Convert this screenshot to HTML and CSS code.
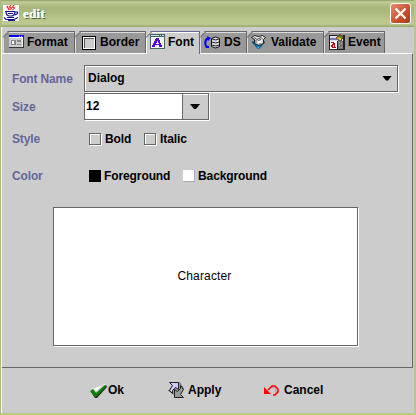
FILE: index.html
```
<!DOCTYPE html>
<html lang="en"><head><meta charset="utf-8"><title>edit</title><link rel="stylesheet" href="styles.css"></head>
<body><div class="window">
<header class="titlebar">
<svg class="logo" width="16" height="16" viewBox="0 0 16 16"><path fill="#fff" d="M0 0h16v16H0z"/><g fill="none" stroke="#f03028"><path d="M5 1l-1 1 2 2-1 1M8 0L6.500 2l2 1L7 5M11 0L9.500 2l2 1-2 2" stroke-width="1.200"/></g><g fill="none" stroke="#10108c" stroke-width="1.200"><path d="M2 6.500h10M3 7l1 3 2 1h3l2-1 1-3M12 7h2.500v1.500L12 10M5 8.500h5M4 12.500h7M1 12.500l2 2h8l4-2M5 15.500h7"/></g></svg>
<span class="title">edit</span>
<button class="close" aria-label="Close"><svg width="19" height="19" viewBox="0 0 19 19"><path d="M4.500 4.500l10 10M14.500 4.500l-10 10" stroke="#fff" stroke-width="2.200"/></svg></button>
</header>
<main class="client">
<nav class="tabs">
<div class="tab format"><svg width="15" height="13" viewBox="0 0 15 13" shape-rendering="crispEdges"><path fill="#333" d="M0 0h15v13H0z"/><path fill="#ccc" d="M0 1h13v11H0z"/><path fill="#00f" d="M0 0h10v2H0zM11 0h1v2h-1zM13 0h1v2h-1z"/><path fill="#888" d="M2 5h5v5H2zM8 5h4v2H8zM8 9h4v1H8z"/><path fill="#fff" d="M3 6h2v3H3zM0 2h13v1H0zM13 2h1v10h-1z"/></svg><span>Format</span></div>
<div class="tab border"><svg width="14" height="14" viewBox="0 0 14 14" shape-rendering="crispEdges"><path fill="#fff" d="M0 0h14v14H0z"/><path fill="#000" d="M0 0h13v1H1v12H0zM13 0h1v14H0v-1h13z"/><path fill="#ccc" d="M2 2h10v10H2z"/><path fill="#555" d="M2 2h10v1H3v9H2z"/></svg><span>Border</span></div>
<div class="tab font active"><svg width="15" height="15" viewBox="0 0 15 15" shape-rendering="crispEdges"><path fill="#466" d="M0 0h15v15H0z"/><path fill="#eef5f5" d="M1 3h13v11H1z"/><path fill="#cdd" d="M1 1h8v1H1zM10 1h1v1h-1zM12 1h2v1h-2z"/><path fill="#50d" fill-rule="evenodd" d="M6 4h3v2h1v3h1v2h1v2H9v-2H5v2H2v-2h1V9h1V7h1V5h1zM7 7v2H6v1h3V9H8V7z"/></svg><span>Font</span></div>
<div class="tab ds"><svg width="17" height="13" viewBox="0 0 17 13"><path fill="none" stroke="#00f" stroke-width="2" d="M5 2C1 3 0 8 3 11"/><path fill="#00f" d="M3 0l4 2-3 3zM1 10h4v2H2z"/><path fill="#ddd" stroke="#111" d="M7.500 2.500q4.500-3 8 0v8q-4 3-8 0z"/><path fill="none" stroke="#222" d="M8 3q4 2 7 0M8 6q4 2 7 0M8 9q4 2 7 0"/></svg><span>DS</span></div>
<div class="tab validate"><svg width="15" height="15" viewBox="0 0 15 15"><path fill="#087cc0" stroke="#024870" d="M1 7h13L7.500 14z"/><path fill="#ddd" stroke="#222" d="M.5 2.500l3-2 4 1 4-1 3 2-2 2v4l-4 2-5-2v-4z"/><path fill="none" stroke="#555" d="M3 2.500l3 2 4-2 2 2M5 5v3M7 6l3-2M8 9h4"/><path fill="#fff" d="M7 6h3v2H7z"/><path fill="#4cf" d="M6 12h2v2z"/></svg><span>Validate</span></div>
<div class="tab event"><svg width="16" height="16" viewBox="0 0 16 16" shape-rendering="crispEdges"><path fill="#222" d="M0 1h16v15H0z"/><path fill="#dde" d="M1 2h13v5H1z"/><path fill="#7777c0" d="M1 4h8v2H1z"/><path fill="#fff" d="M1 7h7v8H1z"/><path fill="#777" d="M9 7h5v8H9z"/><path fill="#bbb" d="M10 8h1v1h-1zM12 9h1v1h-1zM10 11h1v1h-1zM12 13h1v1h-1z"/><path fill="#653" d="M8 1h2V0h2v1h2v4h-1v2H9V5H7V3h1z"/><path fill="#f80" d="M8 3h3v2H8z"/><path fill="#28a040" d="M11 2h2v2h-2z"/><path fill="#fc3" d="M10 4h2v2h-2z"/><path fill="#b00" fill-rule="evenodd" d="M2 8h3v1h1v4h1v1H3v-1H2v-2h1v-1h1V9H2zM4 11v2h1v-2z"/></svg><span>Event</span></div>
</nav>
<section class="panel">
<div class="row name"><label>Font Name</label><div class="combo wide"><span>Dialog</span><i class="arrow"></i></div></div>
<div class="row size"><label>Size</label><div class="combo edit"><span class="field">12</span><i class="arrow"></i></div></div>
<div class="row style"><label>Style</label><i class="check"></i><span class="opt bold">Bold</span><i class="check"></i><span class="opt">Italic</span></div>
<div class="row color"><label>Color</label><i class="swatch black"></i><span class="opt fore">Foreground</span><i class="swatch white"></i><span class="opt">Background</span></div>
<div class="preview">Character</div>
</section>
<footer class="actions">
<div class="action ok"><svg width="17" height="14" viewBox="0 0 17 14"><path fill="#fff" d="M0 6l3-2 3 3 8-7h2z"/><path fill="#222" d="M1 8l4 6h2L17 3l-1-2-9 8z"/><path fill="#088008" d="M0 7l3-2 3 4 9-8 1 2-10 10H5z"/></svg><span>Ok</span></div>
<div class="action apply"><svg width="17" height="18" viewBox="0 0 17 18"><path fill="#999" stroke="#333" stroke-dasharray="1 1" d="M.5 9.500l4-4 7-4 4 6-3 2-3 7z"/><path fill="#ccf" stroke="#222" d="M1.500 1.500h9v7l-3-2-3 3v3l-3-3 3-5z"/><path fill="#999" stroke="#222" d="M6.500 8.500l3 2 3-3v-3l3 4-3 5 3 3h-9z"/></svg><span>Apply</span></div>
<div class="action cancel"><svg width="15" height="11" viewBox="0 0 15 11"><path fill="none" stroke="#999" d="M5 4l4-2 3 2v5"/><path fill="none" stroke="#f00" stroke-width="1.500" d="M4 5l4-4h3l3 3v3l-3 3H9"/><path fill="#f00" d="M0 2l7 7H0z"/></svg><span>Cancel</span></div>
</footer></main></div></body></html>
```
FILE: styles.css
```
* { box-sizing: border-box; }
body { margin: 0; font: bold 12px/14px "Liberation Sans", Arial, sans-serif; color: #000; }
svg { display: block; flex: none; }
.window { width: 416px; height: 415px; background: #ccc; border: solid #a9b978; border-width: 0 2px 2px 1px; border-right-color: #b9c78a; border-bottom-color: #b9c985; overflow: hidden; }
.titlebar { height: 27px; margin-right: -2px; display: flex; align-items: flex-start; padding: 5px 5px 0 2px; background: linear-gradient(#929f68 0, #c4ce9b 2px, #b4c188 4px, #a8b67c 8px, #acba80 13px, #b8c68c 19px, #bdca92 24px, #98a66b 27px); }
.title { margin: 2px 0 0 4px; color: #fff; font: bold 13px/14px "Liberation Serif", serif; letter-spacing: .3px; text-shadow: 0 0 #fff, 1px 1px #4d5b26; }
.close { margin: -2px 0 0 auto; width: 21px; height: 21px; padding: 0; border: 1px solid #fff; border-radius: 3px; background: linear-gradient(135deg, #e48b70, #c94e2c 60%, #a83a18); }
.client { height: 386px; border-left: 1px solid #fff; padding-top: 4px; display: flex; flex-direction: column; }
.tabs { display: flex; height: 22px; margin-left: 1px; }
.tab { position: relative; height: 22px; display: flex; align-items: flex-start; background: #999; border-top: 1px solid #666; border-right: 1px solid #666; box-shadow: inset 1px 1px #ddd; clip-path: polygon(5px 0, 100% 0, 100% 100%, 0 100%, 0 5px); }
.tab::before { content: ""; position: absolute; left: -1px; top: 2px; width: 8px; height: 1px; background: #777; transform: rotate(-45deg); }
.tab span { margin-top: 3px; }
.format { width: 72px; padding-left: 6px; } .format svg { margin: 3px 3px 0 0; }
.border { width: 71px; padding-left: 7px; } .border svg { margin: 4px 4px 0 0; }
.font { width: 54px; padding-left: 4px; } .font svg { margin: 2px 3px 0 0; }
.ds { width: 47px; padding-left: 4px; } .ds svg { margin: 4px 3px 0 0; }
.validate { width: 77px; padding-left: 4px; } .validate svg { margin: 3px 5px 0 0; }
.event { width: 61px; padding-left: 5px; } .event svg { margin: 2px 3px 0 0; }
.active { background: #ccc; border-color: #669; box-shadow: inset 1px 1px #fff; height: 23px; z-index: 1; }
.panel { height: 315px; width: 411px; border: 1px solid #666; border-top-color: #fff; border-left: 0; padding-left: 10px; }
.row { display: flex; align-items: flex-start; }
label { color: #669; width: 72px; flex: none; letter-spacing: -.15px; }
.name { height: 39px; padding-top: 11px; } .name label { margin-top: 7px; }
.size { height: 28px; } .size label { margin-top: 7px; }
.combo { height: 28px; display: flex; align-items: center; border: 1px solid #666; box-shadow: inset 1px 1px #fff, 1px 1px #fff; }
.wide { width: 314px; height: 27px; padding: 0 5px 2px 3px; }
.combo .arrow { width: 10px; height: 5px; background: #000; clip-path: polygon(0 0, 100% 0, 60% 100%, 40% 100%); margin-left: auto; }
.wide .arrow { margin-top: 1px; }
.edit { width: 125px; height: 27px; padding-right: 8px; }
.field { width: 98px; height: 25px; background: #fff; border-right: 1px solid #666; padding: 5px 0 0 1px; }
.style { height: 37px; padding-top: 11px; }
.check { width: 12px; height: 12px; border: 1px solid #666; box-shadow: inset 1px 1px #fff, 1px 1px #fff; margin: 1px 4px 0 5px; }
.bold { width: 34px; }
.color { height: 42px; padding-top: 11px; }
.swatch { width: 12px; height: 12px; margin: 1px 3px 0 5px; }
.black { background: #000; } .white { background: #fff; border: solid #aaa; border-width: 0 1px 1px 0; }
.fore { width: 74px; }
.opt { letter-spacing: -.1px; }
.preview { width: 305px; height: 139px; margin: 7px 0 0 41px; border: 1px solid #666; box-shadow: 1px 1px #fff; background: #fff; display: flex; align-items: center; justify-content: center; font-weight: normal; padding: 0 2px 2px 0; letter-spacing: .15px; }
.actions { display: flex; padding: 12px 0 0 88px; }
.action { display: flex; height: 22px; }
.action span { margin-top: 3px; }
.ok { width: 78px; } .ok svg { margin: 4px 1px 0 0; }
.apply { width: 96px; } .apply svg { margin: 1px 3px 0 0; }
.cancel svg { margin: 5px 5px 0 0; }
```
